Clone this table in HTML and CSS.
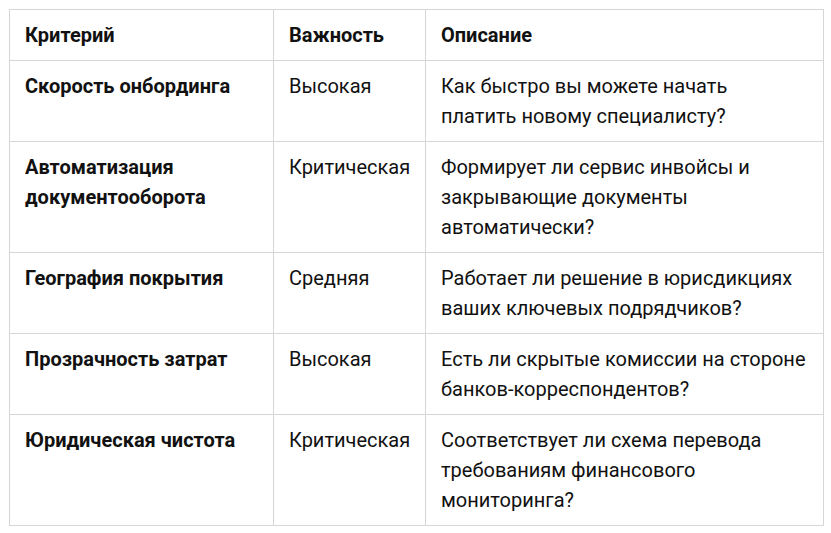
FILE: index.html
```html
<!DOCTYPE html>
<html lang="ru">
<head>
<meta charset="utf-8">
<link rel="stylesheet" href="styles.css">
</head>
<body>
<table class="criteria">
  <colgroup>
    <col class="c1"><col class="c2"><col class="c3">
  </colgroup>
  <thead>
    <tr><th>Критерий</th><th>Важность</th><th>Описание</th></tr>
  </thead>
  <tbody>
    <tr><td class="name">Скорость онбординга</td><td>Высокая</td><td>Как быстро вы можете начать платить новому специалисту?</td></tr>
    <tr><td class="name">Автоматизация документооборота</td><td>Критическая</td><td>Формирует ли сервис инвойсы и закрывающие документы автоматически?</td></tr>
    <tr><td class="name">География покрытия</td><td>Средняя</td><td>Работает ли решение в юрисдикциях ваших ключевых подрядчиков?</td></tr>
    <tr><td class="name">Прозрачность затрат</td><td>Высокая</td><td>Есть ли скрытые комиссии на стороне банков-корреспондентов?</td></tr>
    <tr><td class="name">Юридическая чистота</td><td>Критическая</td><td>Соответствует ли схема перевода требованиям финансового мониторинга?</td></tr>
  </tbody>
</table>
</body>
</html>
```
FILE: styles.css
```css
html, body {
  margin: 0;
  padding: 0;
  background: #fff;
}
body {
  padding: 9px;
  font-family: Roboto, "Liberation Sans", sans-serif;
  font-size: 20px;
  line-height: 30px;
  color: #111;
}
.criteria {
  border-collapse: collapse;
  table-layout: fixed;
  width: 814px;
}
.c1 { width: 264px; }
.c2 { width: 152px; }
.c3 { width: 398px; }
.criteria th,
.criteria td {
  border: 1px solid #d6d6d6;
  padding: 10px 16px 10px 15px;
  text-align: left;
  vertical-align: top;
}
.criteria th {
  font-weight: 700;
}
.criteria td.name {
  font-weight: 700;
}
```
